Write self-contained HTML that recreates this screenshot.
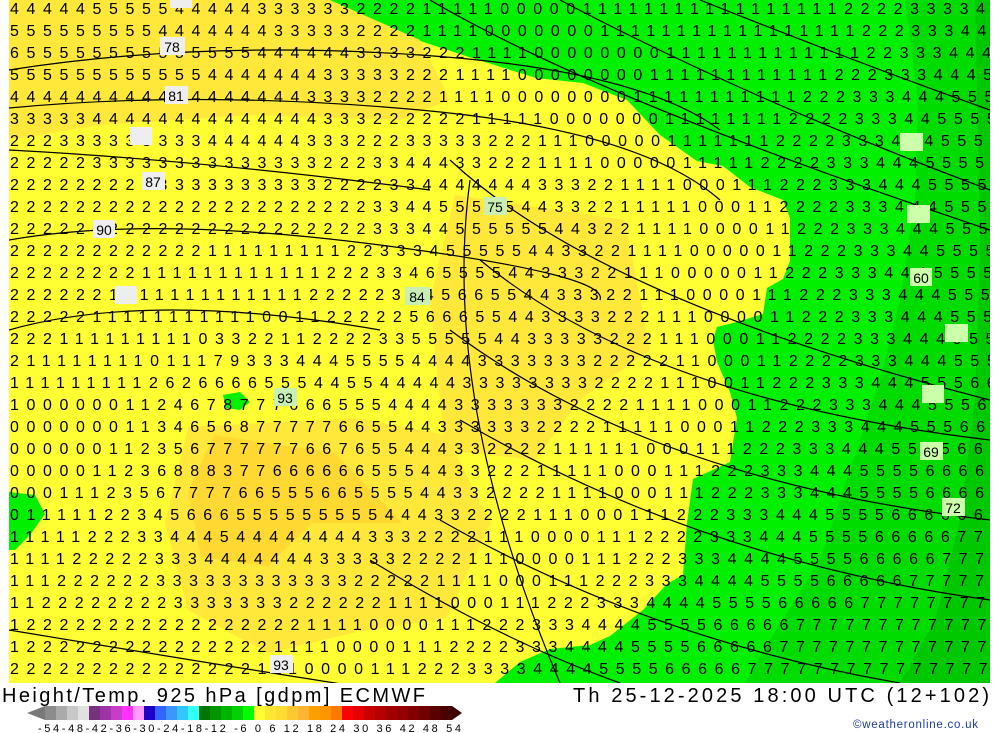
<!DOCTYPE html>
<html><head><meta charset="utf-8"><style>
html,body{margin:0;padding:0;background:#fff;width:1000px;height:733px;overflow:hidden}
svg{display:block}
</style></head><body>
<svg width="1000" height="733" viewBox="0 0 1000 733" xmlns="http://www.w3.org/2000/svg" font-family="Liberation Sans, sans-serif">
<defs><clipPath id="mc"><rect x="9" y="0" width="981" height="683"/></clipPath></defs>
<g clip-path="url(#mc)">
<rect x="9" y="0" width="981" height="683" fill="#00f000"/>
<polygon fill="#00dc00" points="905,0 990,0 990,683 745,683 770,640 820,560 850,470 880,380 900,300 915,200 918,100"/>
<polygon fill="#00c800" points="975,0 990,0 990,683 900,683 935,620 960,520 975,400 980,250"/>
<polygon fill="#ffff33" points="9,0 321,0 357,17 402,35 469,57 536,78 583,83 627,100 660,135 697,161 723,166 750,187 783,200 790,218 790,261 783,279 767,288 763,314 737,322 717,327 713,340 717,362 730,392 737,418 730,462 693,479 687,523 683,575 667,584 643,610 610,636 590,645 550,649 520,662 495,683 9,683"/>
<polygon fill="#ffe83a" points="9,0 330,0 420,40 450,100 400,120 250,115 100,125 9,140"/>
<polygon fill="#ffe83a" points="455,195 625,220 650,350 580,400 535,460 445,450 430,300"/>
<polygon fill="#ffe83a" points="188,427 357,418 446,435 491,523 446,618 357,632 268,653 188,610 165,523"/>
<polygon fill="#ffd832" points="214,435 335,453 402,523 312,523 268,566 201,557 188,492"/>
<polygon fill="#00f000" points="9,492 35,495 45,514 30,535 15,550 9,550"/>
<polygon fill="#00f000" points="223,395 240,392 250,402 240,410 226,408"/>
<g fill="none" stroke="#000" stroke-width="1.2">
<path d="M9,70 Q200,40 420,55 T720,130"/>
<path d="M9,108 Q200,90 420,110 T720,200"/>
<path d="M9,150 Q200,160 430,190"/>
<path d="M9,240 Q150,215 380,245 T600,300"/>
<path d="M9,330 Q150,290 380,330"/>
<path d="M9,630 Q250,670 380,690"/>
<path d="M430,0 Q600,100 990,230"/>
<path d="M560,0 Q750,100 990,190"/>
<path d="M700,0 Q850,60 990,110"/>
<path d="M450,160 Q600,300 990,400"/>
<path d="M480,260 Q650,400 990,440"/>
<path d="M450,330 Q650,480 990,520"/>
<path d="M460,420 Q700,560 990,600"/>
<path d="M440,520 Q650,640 900,683"/>
<path d="M370,560 Q500,640 620,683"/>
<path d="M470,180 Q440,400 560,683"/>
</g>
<g font-size="16" fill="#000" letter-spacing="7.6">
<text x="10" y="14">44444555554444433333322221111100000111111111111111112222333344</text>
<text x="10" y="36">55555555544444443333322221111000000011111111111111111222333444</text>
<text x="10" y="58">65555555555555544444433332221111000000001111111111111223334445</text>
<text x="10" y="80">55555555555544444443333322211110000000011111111111122233344455</text>
<text x="10" y="102">44444444444444444433332222111100000000111111111112223334445556</text>
<text x="10" y="124">33333444444444444443332222221111100000001111111122223334455556</text>
<text x="10" y="146">22233333333344444433322233333222111000001111111222233344455566</text>
<text x="10" y="168">22222333333333333332223344433222111100000111112222333444555566</text>
<text x="10" y="190">22222222233333333332222334444444333221111000111222333444555566</text>
<text x="10" y="212">22222222222222222222223344555554433221111100011222233344455566</text>
<text x="10" y="234">22222222222222222222223334455555544322111100001122233344455556</text>
<text x="10" y="256">22222222222211111111122333455555443322111100000112223334455556</text>
<text x="10" y="278">22222222111111111111222334655554433322111000001122233344455556</text>
<text x="10" y="300">22222211111111111112222233456655443332211100001112223334445556</text>
<text x="10" y="322">22222111111111110011222225666554433332221110000112223334445556</text>
<text x="10" y="344">22211111111103322112222335555544333332221110001122223334445556</text>
<text x="10" y="366">21111111101117933344455554444333333322222110001122223334445556</text>
<text x="10" y="388">11111111126266665554455444443333333322221110011222333444555666</text>
<text x="10" y="410">10000001124678777666555444433333332222111100011222333444555666</text>
<text x="10" y="432">00000001134656877777665544333333222211111000112223334445556666</text>
<text x="10" y="454">00000011235677777766765544433222211111100011122233344455556666</text>
<text x="10" y="476">00000112368883776666665554433222111110001112223334445555666666</text>
<text x="10" y="498">00011123567777665556655554433222211110001112223334445555666666</text>
<text x="10" y="520">01111122345666555555555444332222111000111222333444555566666677</text>
<text x="10" y="542">11111222334445444444443332222111000011122223334445555666667777</text>
<text x="10" y="564">11112222233344444443333322221110000111222333444455556666677777</text>
<text x="10" y="586">11122222233333333333322222111100011122233344445555666667777777</text>
<text x="10" y="608">11222222223333333222222111100011122233344445555666667777777777</text>
<text x="10" y="630">12222222222222222211110000111222333444455556666677777777777777</text>
<text x="10" y="652">12222222222222221111000011122223334444555566666777777777777777</text>
<text x="10" y="674">22222222222222211100001112223333444455556666677777777777777777</text>
</g>
<g font-size="14" text-anchor="middle">
<rect x="170" y="-6" width="22" height="14" fill="#eee"/>
<rect x="160" y="37" width="25" height="18" fill="#eee"/><text x="172" y="52">78</text>
<rect x="165" y="86" width="23" height="18" fill="#eee"/><text x="176" y="101">81</text>
<rect x="130" y="127" width="22" height="18" fill="#eee"/>
<rect x="142" y="172" width="23" height="18" fill="#eee"/><text x="153" y="187">87</text>
<rect x="93" y="220" width="22" height="18" fill="#eee"/><text x="104" y="235">90</text>
<rect x="115" y="286" width="22" height="18" fill="#eee"/>
<rect x="484" y="197" width="23" height="18" fill="#c8f0b4"/><text x="495" y="212">75</text>
<rect x="405" y="287" width="25" height="18" fill="#c8f0b4"/><text x="417" y="302">84</text>
<rect x="274" y="388" width="23" height="18" fill="#c8f0b4"/><text x="285" y="403">93</text>
<rect x="270" y="655" width="23" height="18" fill="#eee"/><text x="281" y="670">93</text>
<rect x="900" y="133" width="23" height="18" fill="#ccffaa"/>
<rect x="907" y="205" width="23" height="18" fill="#ccffaa"/>
<rect x="910" y="268" width="22" height="18" fill="#ccffaa"/><text x="921" y="283">60</text>
<rect x="945" y="324" width="23" height="18" fill="#ccffaa"/>
<rect x="922" y="385" width="22" height="18" fill="#ccffaa"/>
<rect x="920" y="442" width="23" height="18" fill="#ccffaa"/><text x="931" y="457">69</text>
<rect x="942" y="498" width="23" height="18" fill="#ccffaa"/><text x="953" y="513">72</text>
</g>
</g>
<text x="2" y="702" font-size="20" textLength="423" lengthAdjust="spacing">Height/Temp. 925 hPa [gdpm] ECMWF</text>
<text x="573" y="702" font-size="20" textLength="416" lengthAdjust="spacing">Th 25-12-2025 18:00 UTC (12+102)</text>
<text x="853" y="728" font-size="11.5" fill="#1e3ca0" textLength="125" lengthAdjust="spacing">©weatheronline.co.uk</text>
<polygon points="27,713 45,706 45,720" fill="#787878"/>
<g id="cb"></g>
<rect x="45" y="706" width="11" height="14" fill="#8c8c8c"/><rect x="56" y="706" width="11" height="14" fill="#aaaaaa"/><rect x="67" y="706" width="11" height="14" fill="#c8c8c8"/><rect x="78" y="706" width="11" height="14" fill="#e1e1e1"/><rect x="89" y="706" width="11" height="14" fill="#78327d"/><rect x="100" y="706" width="11" height="14" fill="#a032a8"/><rect x="111" y="706" width="11" height="14" fill="#c83cc8"/><rect x="122" y="706" width="11" height="14" fill="#ff32ff"/><rect x="133" y="706" width="11" height="14" fill="#ff9bff"/><rect x="144" y="706" width="11" height="14" fill="#1e00c8"/><rect x="155" y="706" width="11" height="14" fill="#3264ff"/><rect x="166" y="706" width="11" height="14" fill="#3c96ff"/><rect x="177" y="706" width="11" height="14" fill="#32c8ff"/><rect x="188" y="706" width="11" height="14" fill="#32ffff"/><rect x="199" y="706" width="11" height="14" fill="#007800"/><rect x="210" y="706" width="11" height="14" fill="#009600"/><rect x="221" y="706" width="11" height="14" fill="#00b400"/><rect x="232" y="706" width="11" height="14" fill="#00d200"/><rect x="243" y="706" width="11" height="14" fill="#00ff00"/><rect x="254" y="706" width="11" height="14" fill="#ffff32"/><rect x="265" y="706" width="11" height="14" fill="#ffe632"/><rect x="276" y="706" width="11" height="14" fill="#ffdc32"/><rect x="287" y="706" width="11" height="14" fill="#ffc832"/><rect x="298" y="706" width="11" height="14" fill="#ffb432"/><rect x="309" y="706" width="11" height="14" fill="#ffa000"/><rect x="320" y="706" width="11" height="14" fill="#ff9600"/><rect x="331" y="706" width="11" height="14" fill="#ff7800"/><rect x="342" y="706" width="11" height="14" fill="#ff0000"/><rect x="353" y="706" width="11" height="14" fill="#e60000"/><rect x="364" y="706" width="11" height="14" fill="#c80000"/><rect x="375" y="706" width="11" height="14" fill="#b40000"/><rect x="386" y="706" width="11" height="14" fill="#a00000"/><rect x="397" y="706" width="11" height="14" fill="#960000"/><rect x="408" y="706" width="11" height="14" fill="#800000"/><rect x="419" y="706" width="11" height="14" fill="#6e0000"/><rect x="430" y="706" width="11" height="14" fill="#5a0000"/><rect x="441" y="706" width="11" height="14" fill="#460000"/>
<polygon points="452,706 462,713 452,720" fill="#3c0000"/>
<text x="38" y="732" font-size="11" textLength="423" lengthAdjust="spacing">-54-48-42-36-30-24-18-12 -6  0  6  12  18  24  30  36  42  48  54</text>
</svg>
</body></html>
